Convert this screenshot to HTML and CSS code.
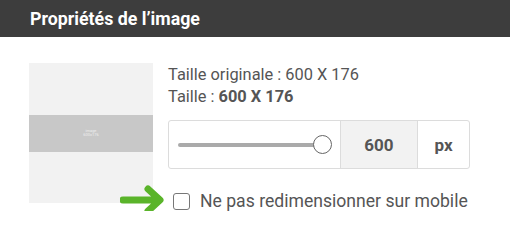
FILE: index.html
```html
<!DOCTYPE html>
<html lang="fr">
<head>
<meta charset="utf-8">
<link rel="stylesheet" href="styles.css">
</head>
<body>
<div class="header">Propriétés de l’image</div>
<div class="content">
  <div class="thumb">
    <div class="band"><span class="band-text">image<br>600x176</span></div>
  </div>
  <div class="info">
    <div class="line">Taille originale : 600 X 176</div>
    <div class="line">Taille : <b>600 X 176</b></div>
    <div class="sizer">
      <div class="slider">
        <div class="track"></div>
        <div class="knob"></div>
      </div>
      <div class="value">600</div>
      <div class="unit">px</div>
    </div>
    <label class="check-row">
      <svg class="arrow" width="46" height="32" viewBox="0 0 46 32">
        <path d="M3 16 H38 M28 5 L40 16 L28 27" fill="none" stroke="#5ab42a" stroke-width="7" stroke-linecap="round" stroke-linejoin="round"/>
      </svg>
      <span class="box"></span>
      <span class="check-label">Ne pas redimensionner sur mobile</span>
    </label>
  </div>
</div>
</body>
</html>
```
FILE: styles.css
```css
* { box-sizing: border-box; }
body {
  margin: 0;
  background: #fff;
  font-family: Roboto, "Liberation Sans", sans-serif;
  color: #555;
}
.header {
  height: 37px;
  background: #3d3d3d;
  color: #fff;
  font-weight: 700;
  font-size: 17.8px;
  line-height: 37px;
  padding-left: 30px;
}
.content {
  display: flex;
  padding: 26px 0 0 29px;
  gap: 15px;
}
.thumb {
  width: 124px;
  height: 140px;
  background: #f2f2f2;
  display: flex;
  align-items: center;
}
.band {
  width: 100%;
  height: 37px;
  background: #c8c8c8;
  display: flex;
  align-items: center;
  justify-content: center;
}
.band-text {
  font-size: 4px;
  line-height: 4px;
  color: #eee;
  text-align: center;
}
.info {
  position: relative;
  width: 302px;
  padding-top: 1px;
}
.line {
  font-size: 16.4px;
  line-height: 22px;
  height: 22px;
}
.line b { font-weight: 700; }
.sizer {
  margin-top: 12px;
  height: 49px;
  border: 1px solid #dcdcdc;
  border-radius: 3px;
  display: flex;
  overflow: hidden;
}
.slider {
  position: relative;
  width: 172px;
  border-right: 1px solid #dcdcdc;
}
.track {
  position: absolute;
  left: 9px;
  top: 22px;
  width: 140px;
  height: 4px;
  border-radius: 2px;
  background: #aaa;
}
.knob {
  position: absolute;
  left: 144px;
  top: 14px;
  width: 19px;
  height: 19px;
  border-radius: 50%;
  border: 1px solid #666;
  background: #fff;
}
.value {
  width: 77px;
  background: #f2f2f2;
  border-right: 1px solid #dcdcdc;
  display: flex;
  align-items: center;
  justify-content: center;
  font-weight: 700;
  font-size: 17px;
}
.unit {
  flex: 1;
  display: flex;
  align-items: center;
  justify-content: center;
  font-weight: 700;
  font-size: 17px;
}
.check-row {
  position: relative;
  margin-top: 22px;
  display: flex;
  align-items: center;
  gap: 10px;
  padding-left: 5px;
}
.arrow {
  position: absolute;
  left: -48px;
  top: -7px;
}
.box {
  width: 17px;
  height: 17px;
  border: 1.5px solid #777;
  border-radius: 3px;
  background: #fff;
}
.check-label {
  font-size: 17.6px;
  line-height: 20px;
}
```
